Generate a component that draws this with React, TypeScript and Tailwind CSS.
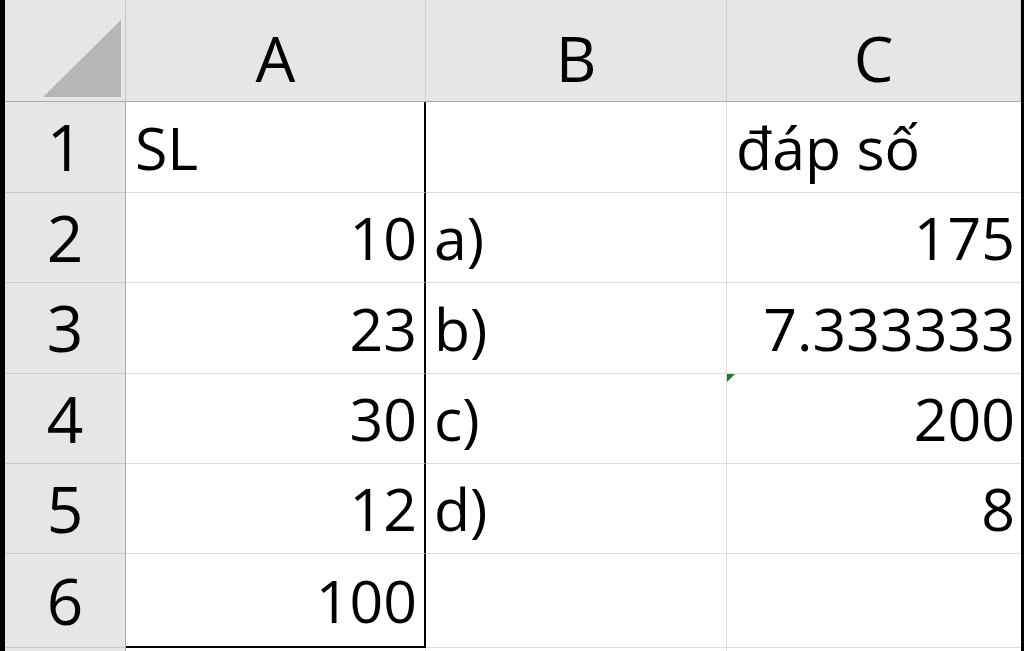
import React from "react";

type Row = {
  n: string;
  h: string;
  a: string;
  aLeft?: boolean;
  b: string;
  c: string;
  cLeft?: boolean;
  last?: boolean;
  mark?: boolean;
};

const rows: Row[] = [
  { n: "1", h: "h-[91px]", a: "SL", aLeft: true, b: "", c: "đáp số", cLeft: true },
  { n: "2", h: "h-[90px]", a: "10", b: "a)", c: "175" },
  { n: "3", h: "h-[91px]", a: "23", b: "b)", c: "7.333333" },
  { n: "4", h: "h-[90px]", a: "30", b: "c)", c: "200", mark: true },
  { n: "5", h: "h-[90px]", a: "12", b: "d)", c: "8" },
  { n: "6", h: "h-[94px]", a: "100", b: "", c: "", last: true },
];

export default function App() {
  return (
    <div
      className="w-[1024px] h-[651px] overflow-hidden bg-black flex text-black font-medium"
      style={{ fontFamily: '"Open Sans", "Noto Sans", sans-serif' }}
    >
      <div className="w-[5px] shrink-0 bg-black" />
      <div className="w-[1016px] shrink-0 flex flex-col bg-white">
        {/* header */}
        <div className="flex h-[102px] shrink-0">
          <div className="w-[121px] shrink-0 bg-[#e6e6e6] border-b border-r border-b-[#ababab] border-r-[#c8c8c8] relative">
            <svg className="absolute left-0 top-0" width="120" height="101" viewBox="0 0 120 101">
              <polygon points="38,97 116,20 116,97" fill="#b6b6b6" />
            </svg>
          </div>
          {[
            { l: "A", w: "w-[300px]" },
            { l: "B", w: "w-[301px]" },
            { l: "C", w: "w-[294px]" },
          ].map((c) => (
            <div
              key={c.l}
              className={`${c.w} shrink-0 bg-[#e6e6e6] border-b border-r border-b-[#ababab] border-r-[#cfcfcf] flex items-end justify-center text-[63px] leading-[1.36]`}
            >
              {c.l}
            </div>
          ))}
        </div>
        {rows.map((r) => (
          <div key={r.n} className={`flex ${r.h} shrink-0`}>
            <div className="w-[121px] shrink-0 bg-[#e6e6e6] border-b border-r border-b-[#c8c8c8] border-r-[#ababab] flex items-center justify-center text-[64px] leading-[1.36]">
              {r.n}
            </div>
            <div
              className={`w-[300px] shrink-0 border-r-2 border-r-black flex items-center text-[59px] leading-[1.36] ${
                r.last ? "border-b-2 border-b-black" : "border-b border-b-[#dcdcdc]"
              } ${r.aLeft ? "justify-start pl-[9px]" : "justify-end pr-[7px]"}`}
            >
              {r.a}
            </div>
            <div className="w-[301px] shrink-0 border-b border-r border-[#dcdcdc] flex items-center justify-start pl-[8px] text-[59px] leading-[1.36]">
              {r.b}
            </div>
            <div
              className={`w-[294px] shrink-0 border-b border-[#dcdcdc] relative flex items-center text-[59px] leading-[1.36] ${
                r.cLeft ? "justify-start pl-[9px]" : "justify-end pr-[6px]"
              }`}
            >
              {r.mark && (
                <svg className="absolute left-0 top-0" width="8" height="9" viewBox="0 0 8 9">
                  <polygon points="0,0 8,0 0,8" fill="#1f7a2a" />
                </svg>
              )}
              {r.c}
            </div>
          </div>
        ))}
        <div className="flex h-[20px] shrink-0">
          <div className="w-[121px] shrink-0 bg-[#e6e6e6] border-r border-r-[#ababab]" />
          <div className="w-[300px] shrink-0 border-r border-r-[#dcdcdc]" />
          <div className="w-[301px] shrink-0 border-r border-r-[#dcdcdc]" />
          <div className="w-[294px] shrink-0" />
        </div>
      </div>
      <div className="w-[3px] shrink-0 bg-black" />
    </div>
  );
}
